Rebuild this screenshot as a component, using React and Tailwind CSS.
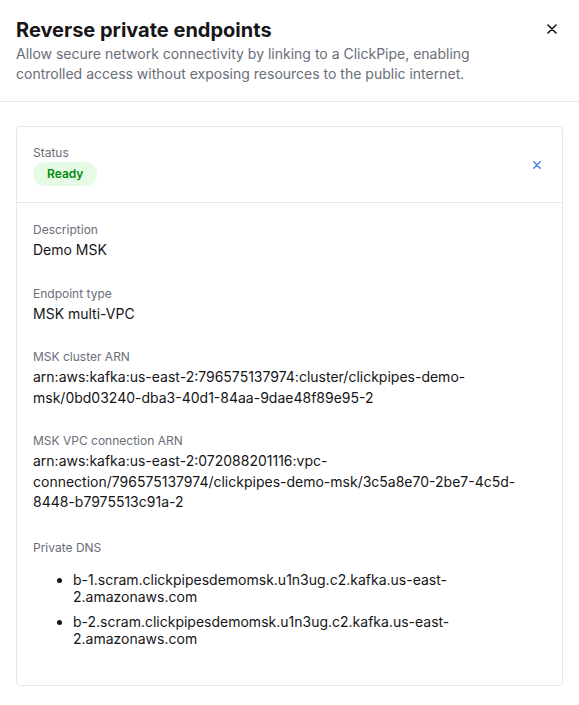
const fields = [
  { label: 'Description', value: 'Demo MSK' },
  { label: 'Endpoint type', value: 'MSK multi-VPC' },
  {
    label: 'MSK cluster ARN',
    value:
      'arn:aws:kafka:us-east-2:796575137974:cluster/clickpipes-demo-msk/0bd03240-dba3-40d1-84aa-9dae48f89e95-2',
  },
  {
    label: 'MSK VPC connection ARN',
    value:
      'arn:aws:kafka:us-east-2:072088201116:vpc-connection/796575137974/clickpipes-demo-msk/3c5a8e70-2be7-4c5d-8448-b7975513c91a-2',
  },
];

const dnsNames = [
  'b-1.scram.clickpipesdemomsk.u1n3ug.c2.kafka.us-east-2.amazonaws.com',
  'b-2.scram.clickpipesdemomsk.u1n3ug.c2.kafka.us-east-2.amazonaws.com',
];

function CrossIcon({ size = 10, className = '', strokeWidth = 1.5 }) {
  return (
    <svg
      width={size}
      height={size}
      viewBox="0 0 10 10"
      fill="none"
      stroke="currentColor"
      strokeWidth={strokeWidth}
      strokeLinecap="round"
      className={className}
    >
      <path d="M1 1L9 9M9 1L1 9" />
    </svg>
  );
}

export default function App() {
  return (
    <div
      className="min-h-[705px] bg-white text-[#161517]"
      style={{ fontFamily: 'Inter, "Noto Sans", sans-serif' }}
    >
      {/* header */}
      <div className="flex items-start justify-between border-b border-[#e6e7e9] px-4 pt-4 pb-[17px]">
        <div>
          <h1 className="text-[20px] font-bold leading-7 text-[#161517]">
            Reverse private endpoints
          </h1>
          <p className="max-w-[460px] text-sm leading-5 text-[#696e79]">
            Allow secure network connectivity by linking to a ClickPipe,
            enabling controlled access without exposing resources to the public
            internet.
          </p>
        </div>
        <button className="mt-[8px] mr-[6px] text-[#161517]">
          <CrossIcon size={10} strokeWidth={1.6} />
        </button>
      </div>

      <div className="px-4 pt-6 pb-5">
        <div className="rounded border border-[#e6e7e9]">
          {/* status */}
          <div className="flex items-center justify-between border-b border-[#e6e7e9] px-4 pt-[17px] pb-4">
            <div className="flex flex-col">
              <span className="text-xs leading-[18px] text-[#696e79]">
                Status
              </span>
              <span className="inline-flex h-6 w-fit items-center rounded-full bg-[#e5fbe6] px-3.5 text-xs font-semibold text-[#008a0b]">
                Ready
              </span>
            </div>
            <button className="mr-[5px] text-[#437eef]">
              <CrossIcon size={8} strokeWidth={1.8} />
            </button>
          </div>

          {/* details */}
          <div className="flex flex-col gap-6 px-4 pt-[18px] pb-[38px]">
            {fields.map((f) => (
              <div key={f.label} className="flex flex-col gap-px">
                <span className="text-xs leading-[18px] text-[#696e79]">
                  {f.label}
                </span>
                <span className="break-words text-sm leading-[20.5px]">
                  {f.value}
                </span>
              </div>
            ))}
            <div className="mt-0.5 flex flex-col">
              <span className="text-xs leading-[18px] text-[#696e79]">
                Private DNS
              </span>
              <ul className="mt-3.5 list-disc space-y-2 pl-10 text-sm leading-[17px]">
                {dnsNames.map((d) => (
                  <li key={d} className="max-w-[430px]">
                    {d}
                  </li>
                ))}
              </ul>
            </div>
          </div>
        </div>
      </div>
    </div>
  );
}
